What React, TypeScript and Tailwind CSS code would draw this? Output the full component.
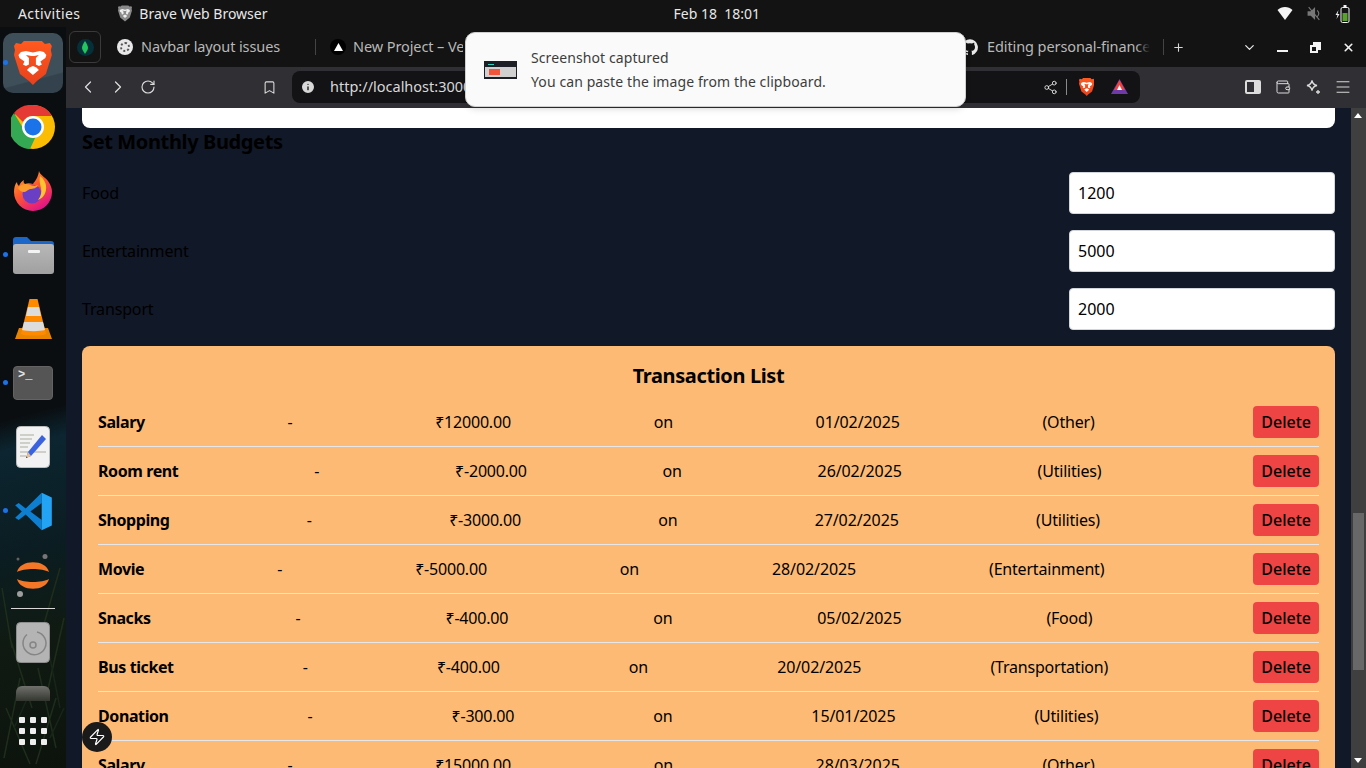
import { ChevronDown, ChevronLeft, ChevronRight, Info, Menu, Plus, RotateCw, Share2, Wallet, X, Zap, Bookmark } from "lucide-react";

const transactions = [
  { name: "Salary", amount: "₹12000.00", date: "01/02/2025", category: "(Other)" },
  { name: "Room rent", amount: "₹-2000.00", date: "26/02/2025", category: "(Utilities)" },
  { name: "Shopping", amount: "₹-3000.00", date: "27/02/2025", category: "(Utilities)" },
  { name: "Movie", amount: "₹-5000.00", date: "28/02/2025", category: "(Entertainment)" },
  { name: "Snacks", amount: "₹-400.00", date: "05/02/2025", category: "(Food)" },
  { name: "Bus ticket", amount: "₹-400.00", date: "20/02/2025", category: "(Transportation)" },
  { name: "Donation", amount: "₹-300.00", date: "15/01/2025", category: "(Utilities)" },
  { name: "Salary", amount: "₹15000.00", date: "28/03/2025", category: "(Other)" },
];

const budgets = [
  { label: "Food", value: "1200" },
  { label: "Entertainment", value: "5000" },
  { label: "Transport", value: "2000" },
];

function BraveIcon({ size = 44 }: { size?: number }) {
  return (
    <svg width={size * 0.86} height={size} viewBox="0 0 38 44">
      <defs>
        <linearGradient id="brave" x1="0" y1="0" x2="0" y2="1">
          <stop offset="0" stopColor="#ff5a1f" />
          <stop offset="1" stopColor="#e8401c" />
        </linearGradient>
      </defs>
      <path d="M10 0h18l3 3 5-1 2 3-1 4 1 5-6 19-9 7-4 4-4-4-9-7L0 14l1-5-1-4 2-3 5 1z" fill="url(#brave)" />
      <path d="M12 10l7 1.500L26 10l4 1 2.500 3-1 3-5 3.500 1.500 3-3 1.500-3-1.500V17l3-3-4.500 1h-3L12 14l3 3v6.500L12 25l-3-1.500 1.500-3-5-3.500-1-3L7 11z" fill="#fff" />
      <path d="M15.500 26.500L19 25l3.500 1.500L25 29l-6 5-6-5z" fill="#fff" />
    </svg>
  );
}

function ChromeIcon() {
  return (
    <svg width="44" height="44" viewBox="0 0 44 44">
      <circle cx="22" cy="22" r="22" fill="#fbbc04" />
      <path d="M22 0a22 22 0 0 1 19 11H22a11 11 0 0 0-10 6L3 8A22 22 0 0 1 22 0z" fill="#e53935" />
      <path d="M3 8l9.500 16a11 11 0 0 0 12 8L19 44A22 22 0 0 1 3 8z" fill="#34a853" />
      <circle cx="22" cy="22" r="11" fill="#fff" />
      <circle cx="22" cy="22" r="8.500" fill="#1a73e8" />
    </svg>
  );
}

function FirefoxIcon() {
  return (
    <svg width="40" height="40" viewBox="0 0 40 40">
      <defs>
        <linearGradient id="ff" x1="0" y1="0" x2="0.6" y2="1">
          <stop offset="0" stopColor="#ffbd2e" />
          <stop offset="0.5" stopColor="#ff5a2c" />
          <stop offset="1" stopColor="#e31587" />
        </linearGradient>
      </defs>
      <path d="M26 0c1 4 6 6 9 10 3 4 4 8 4 11a19 19 0 1 1-38 0c0-4 1-8 3-10 0 2 1 3 2 4 1-3 3-5 5-6-1 2 0 3 1 4 2-1 5-1 8 0 2-3 5-6 6-13z" fill="url(#ff)" />
      <circle cx="19" cy="23" r="9.500" fill="#6a3fc4" />
      <path d="M5 17c3-4 8-5 12-3 3 1 6 1 8 0-1 3-5 4-8 4-3 1-4 3-6 3-3 0-5-2-6-4z" fill="#ff9e2c" />
      <path d="M27 5c4 3 7 8 6 14-1 6-5 9-8 10 3-4 4-8 3-12-1-4-2-8-1-12z" fill="#ffc52e" />
    </svg>
  );
}

function FilesIcon() {
  return (
    <svg width="41" height="38" viewBox="0 0 41 38">
      <defs>
        <linearGradient id="folder" x1="0" y1="0" x2="0" y2="1">
          <stop offset="0" stopColor="#b8b8b8" />
          <stop offset="1" stopColor="#a0a0a0" />
        </linearGradient>
      </defs>
      <path d="M0 4a3 3 0 0 1 3-3h11l4 4h20a3 3 0 0 1 3 3v10H0z" fill="#1b66c9" />
      <rect y="8" width="41" height="30" rx="3" fill="url(#folder)" />
      <rect x="15" y="14" width="12" height="3" rx="1" fill="#f3f3f3" />
    </svg>
  );
}

function VlcIcon() {
  return (
    <svg width="37" height="42" viewBox="0 0 37 42">
      <path d="M4 30h29l4 11H0z" fill="#e88400" />
      <path d="M14.500 1h8l8.500 35c-4 2-21 2-25 0z" fill="#ff8a00" />
      <path d="M13 9h11l2 9H11z" fill="#dcdcdc" />
      <path d="M9 24h19l2 8c-5 1.500-18 1.500-23 0z" fill="#dcdcdc" />
    </svg>
  );
}

function TerminalIcon() {
  return (
    <div className="w-10 h-[34px] rounded-[4px] bg-[#555555] border border-[#636363] pl-[4px] pt-[1px] text-[#e5e5e5] text-[12px] leading-[14px] font-['Liberation_Mono',monospace] font-bold">
      &gt;_
    </div>
  );
}

function EditorIcon() {
  return (
    <svg width="34" height="42" viewBox="0 0 34 42">
      <rect x="0.500" y="0.500" width="33" height="41" rx="4" fill="#f2f2f2" stroke="#bdbdbd" />
      <path d="M4 9h14M4 13h12M4 17h10M4 21h8M4 26h26M4 30h6" stroke="#c4c4bc" strokeWidth="1.500" />
      <path d="M26 9l4 4-15 17-5 2 2-6z" fill="#3b63e0" />
      <path d="M12 26l3 4-5 2z" fill="#e9c08a" />
      <path d="M10.500 30.500L10 32l1.500-.5z" fill="#333" />
    </svg>
  );
}

function VscodeIcon() {
  return (
    <svg width="39" height="39" viewBox="0 0 100 100">
      <path d="M71 2L30 42 12 28l-9 6 17 16L3 66l9 6 18-14 41 40V72L42 50l29-22z" fill="#0e7fd0" />
      <path d="M71 2l26 12v72L71 98z" fill="#22a3f3" />
    </svg>
  );
}

function JupyterIcon() {
  return (
    <svg width="36" height="44" viewBox="0 0 36 44">
      <path d="M2 19C5 6 31 6 34 19 27 15 9 15 2 19z" fill="#f37726" />
      <path d="M2 26C5 39 31 39 34 26 27 30 9 30 2 26z" fill="#f37726" />
      <circle cx="30" cy="3.500" r="2.500" fill="#767677" />
      <circle cx="3" cy="6" r="1.500" fill="#616262" />
      <circle cx="5" cy="41" r="3" fill="#9e9e9e" />
    </svg>
  );
}

function DiscIcon() {
  return (
    <svg width="34" height="41" viewBox="0 0 34 41">
      <rect x="0.500" y="0.500" width="33" height="40" rx="4" fill="#b4b4b4" stroke="#8e8e8e" />
      <path d="M21 10a11.500 11.500 0 1 1-10 2.500" fill="none" stroke="#858585" strokeWidth="1.500" />
      <circle cx="17" cy="23" r="3" fill="none" stroke="#858585" strokeWidth="1.500" />
    </svg>
  );
}

function Grass() {
  return (
    <svg className="absolute left-0 bottom-0" width="66" height="220" viewBox="0 0 66 220" fill="none" stroke="#1f2e1a" strokeWidth="1.500">
      <path d="M2 40l10 60M60 20L40 90M10 90l22 70M64 70L46 150M20 130L4 210M38 120l18 80M56 150l-20 66M6 160l24 56" />
      <path d="M48 100l12 60M14 180l18-40M50 190l14-30" stroke="#18251a" />
    </svg>
  );
}

function DockItem({ dot, active, children }: { dot?: boolean; active?: boolean; children: React.ReactNode }) {
  return (
    <div className="relative h-16 w-full flex items-center justify-center">
      {active && <div className="absolute left-[3px] top-[2px] w-[60px] h-[60px] rounded-[10px] bg-[linear-gradient(165deg,#3f4f5a_0%,#3f4f5a_72%,#33424c_74%)]" />}
      {dot && <div className="absolute left-[3px] top-[29px] w-[5px] h-[5px] rounded-full bg-[#1a73e8]" />}
      <div className="relative flex">{children}</div>
    </div>
  );
}

function Dock() {
  return (
    <aside className="relative w-[66px] shrink-0 flex flex-col pt-[4px] overflow-hidden bg-[linear-gradient(165deg,#0a0e11_0%,#0a0e11_52%,#0c2530_56%,#0b1d22_70%,#101a12_82%,#0c130d_100%)]">
      <Grass />
      <DockItem active dot>
        <BraveIcon />
      </DockItem>
      <DockItem>
        <ChromeIcon />
      </DockItem>
      <DockItem>
        <FirefoxIcon />
      </DockItem>
      <DockItem dot>
        <FilesIcon />
      </DockItem>
      <DockItem>
        <VlcIcon />
      </DockItem>
      <DockItem dot>
        <TerminalIcon />
      </DockItem>
      <DockItem>
        <EditorIcon />
      </DockItem>
      <DockItem dot>
        <VscodeIcon />
      </DockItem>
      <DockItem>
        <JupyterIcon />
      </DockItem>
      <div className="relative h-px mx-[11px] mt-[1px] bg-[#d8d8d8] shrink-0" />
      <div className="relative flex justify-center mt-[13px] shrink-0">
        <DiscIcon />
      </div>
      <div className="relative mx-auto mt-[23px] w-[34px] h-[15px] shrink-0 rounded-t-[6px] bg-[linear-gradient(#70706c,#33362f)]" />
      <div className="relative mx-auto mt-[16px] grid grid-cols-3 gap-[5px] shrink-0">
        {Array.from({ length: 9 }).map((_, i) => (
          <div key={i} className="w-[6px] h-[6px] rounded-[1px] bg-[#eeeeee]" />
        ))}
      </div>
    </aside>
  );
}

function TopBar() {
  return (
    <header className="h-[27px] shrink-0 bg-[#131313] text-[#e8e8e8] text-[14px] flex items-center relative">
      <span className="ml-[18px] tracking-[0.4px]">Activities</span>
      <svg className="ml-[38px]" width="14" height="17" viewBox="0 0 38 44">
        <path d="M10 0h18l3 3 5-1 2 3-1 4 1 5-6 19-9 7-4 4-4-4-9-7L0 14l1-5-1-4 2-3 5 1z" fill="#8a8a8a" />
        <path d="M12 10l7 1.500L26 10l4 1 2.500 3-1 3-5 3.500 1.500 3-3 1.500-3-1.500V17l3-3-4.500 1h-3L12 14l3 3v6.500L12 25l-3-1.500 1.500-3-5-3.500-1-3L7 11z" fill="#eee" />
        <path d="M15.500 26.500L19 25l3.500 1.500L25 29l-6 5-6-5z" fill="#eee" />
      </svg>
      <span className="ml-[7px]">Brave Web Browser</span>
      <span className="ml-[406px]">Feb 18&nbsp; 18:01</span>
      <div className="ml-auto mr-[16px] flex items-center gap-[13px]">
        <svg width="16" height="13" viewBox="0 0 15 13">
          <path d="M0 3c4-4 11-4 15 0l-7.500 10z" fill="#f4f4f4" />
        </svg>
        <svg width="16" height="15" viewBox="0 0 14 14">
          <path d="M1 5h3l4-4v12l-4-4H1z" fill="#777" />
          <path d="M10 4c2 2 2 4 0 6M2 1l10 12" stroke="#777" fill="none" />
        </svg>
        <svg width="15" height="18" viewBox="0 0 14 18">
          <path d="M3 5L0 10h2l-1 4 3-5H2z" fill="#f4f4f4" />
          <rect x="5.500" y="2.500" width="8" height="15" rx="1.500" fill="none" stroke="#f4f4f4" />
          <rect x="8" y="0" width="3" height="2" fill="#f4f4f4" />
          <rect x="7" y="8" width="5" height="8" fill="#5aa02c" />
        </svg>
      </div>
    </header>
  );
}

function TabStrip() {
  return (
    <div className="h-[40px] shrink-0 bg-[#131313] flex items-center text-[14.5px] tracking-[-0.1px] text-[#b8b8b8]">
      <div className="ml-[3px] w-[32px] h-[32px] rounded-[6px] border border-[#3a3a3a] flex items-center justify-center">
        <div className="w-[17px] h-[17px] rounded-full bg-[#05303a] flex items-center justify-center">
          <svg width="6" height="13" viewBox="0 0 6 13">
            <path d="M3 0c2 3 3 5 3 7s-2 4-3 6c-1-2-3-4-3-6s1-4 3-7z" fill="#22c55e" />
          </svg>
        </div>
      </div>
      <div className="ml-[16px] w-[16px] h-[16px] rounded-full bg-[#e8e8e8] flex items-center justify-center">
        <div className="w-[10px] h-[10px] rounded-full border-2 border-dotted border-[#555555]" />
      </div>
      <span className="ml-[8px]">Navbar layout issues</span>
      <div className="ml-[35px] w-px h-[16px] bg-[#444444]" />
      <div className="ml-[14px] w-[16px] h-[16px] rounded-full bg-black flex items-center justify-center">
        <svg width="9" height="8" viewBox="0 0 9 8">
          <path d="M4.500 0L9 8H0z" fill="#fff" />
        </svg>
      </div>
      <span className="ml-[7px] w-[110px] overflow-hidden whitespace-nowrap">New Project – Vercel</span>
      <svg className="ml-[499px]" width="16" height="16" viewBox="0 0 24 24">
        <path
          fill="#e8e8e8"
          d="M12 .5a12 12 0 0 0-3.800 23.400c.6.100.8-.3.800-.6v-2c-3.300.7-4-1.600-4-1.600-.6-1.400-1.400-1.800-1.400-1.800-1-.7.100-.7.100-.7 1.200.1 1.800 1.200 1.800 1.200 1 1.800 2.800 1.300 3.500 1 .1-.8.400-1.300.8-1.600-2.700-.3-5.500-1.300-5.500-5.900 0-1.300.5-2.400 1.200-3.200-.1-.3-.5-1.500.1-3.200 0 0 1-.3 3.300 1.200a11.500 11.500 0 0 1 6 0c2.300-1.500 3.300-1.200 3.300-1.200.6 1.700.2 2.900.1 3.200.8.800 1.200 1.900 1.200 3.200 0 4.600-2.800 5.600-5.500 5.900.4.400.8 1.100.8 2.200v3.300c0 .3.200.7.800.6A12 12 0 0 0 12 .5z"
        />
      </svg>
      <span className="ml-[9px] relative w-[163px] overflow-hidden whitespace-nowrap">
        Editing personal-finance
        <span className="absolute right-0 top-0 bottom-0 w-[14px] bg-[linear-gradient(to_right,transparent,#131313)]" />
      </span>
      <div className="ml-[13px] w-px h-[16px] bg-[#444444]" />
      <Plus className="ml-[8px] text-[#d8d8d8]" size={13} strokeWidth={2} />
      <ChevronDown className="ml-[57px] text-[#e8e8e8]" size={15} strokeWidth={2} />
      <div className="ml-[20px] w-[11px] h-[2px] translate-y-[4px] bg-[#f2f2f2]" />
      <div className="ml-[22px] relative w-[11px] h-[11px]">
        <div className="absolute right-0 top-0 w-[8px] h-[8px] bg-[#f2f2f2]" />
        <div className="absolute left-0 bottom-0 w-[8px] h-[8px] border-2 border-[#f2f2f2] bg-[#131313]" />
      </div>
      <X className="ml-[21px] text-[#f2f2f2]" size={13} strokeWidth={3} />
    </div>
  );
}

function Toolbar() {
  return (
    <div className="h-[41px] shrink-0 pb-px bg-[#303034] flex items-center text-[#dcdcdc]">
      <ChevronLeft className="ml-[12px]" size={20} strokeWidth={1.5} />
      <ChevronRight className="ml-[10px]" size={20} strokeWidth={1.5} />
      <RotateCw className="ml-[12px]" size={16} strokeWidth={1.7} />
      <Bookmark className="ml-[106px]" size={15} strokeWidth={1.7} />
      <div className="ml-[15px] w-[848px] h-[32px] rounded-[8px] bg-[#131316] flex items-center">
        <Info className="ml-[8px] fill-[#d8d8d8] text-[#131316]" size={16} strokeWidth={2} />
        <span className="ml-[14px] text-[14.5px] text-[#d8d8d8]">http://localhost:3000</span>
        <Share2 className="ml-auto" size={15} strokeWidth={1.5} />
        <div className="ml-[8px] w-px h-[16px] bg-[#8a8a8a]" />
        <div className="ml-[12px] flex">
          <BraveIcon size={18} />
        </div>
        <svg className="ml-[17px] mr-[12px]" width="17" height="16" viewBox="0 0 17 16">
          <path d="M8.500 0L17 15H0z" fill="#6f3aa8" />
          <path d="M8.500 1L14 11H3z" fill="#f0443c" />
          <path d="M8.500 6L11 11H6z" fill="#fff" />
        </svg>
      </div>
      <div className="ml-[105px] w-[16px] h-[14px] border-2 border-[#dcdcdc] rounded-[2px] flex justify-end">
        <div className="w-[5px] bg-[#dcdcdc]" />
      </div>
      <Wallet className="ml-[14px]" size={16} strokeWidth={1.5} />
      <svg className="ml-[14px]" width="16" height="16" viewBox="0 0 16 16" fill="none" stroke="currentColor" strokeWidth="1.300">
        <path d="M7 1.500c.6 3 2 4.500 5 5-3 .6-4.400 2-5 5-.6-3-2-4.400-5-5 3-.5 4.400-2 5-5z" />
        <path d="M13 11v4M11 13h4" />
      </svg>
      <Menu className="ml-[13px]" size={18} strokeWidth={1.3} />
    </div>
  );
}

function Notification() {
  return (
    <div className="absolute left-[465px] top-[32px] w-[501px] h-[75px] rounded-[10px] bg-[#fafafa] border border-[#cfcfcf] shadow-md flex items-center">
      <div className="ml-[18px] w-[33px] h-[18px] bg-[#1c1f26] flex flex-col">
        <div className="ml-[4px] mt-[3px] w-[6px] h-px bg-[#2dd4bf]" />
        <div className="mx-px mt-[2px] h-[10px] bg-[#d0d0d0] flex items-center">
          <div className="ml-[4px] w-[11px] h-[6px] bg-[#f0553c]" />
        </div>
      </div>
      <div className="ml-[14px] text-[14px] tracking-[0.1px] text-[#3d3d3d] flex flex-col gap-[6px] leading-[18px]">
        <span>Screenshot captured</span>
        <span>You can paste the image from the clipboard.</span>
      </div>
    </div>
  );
}

function Scrollbar() {
  return (
    <div className="relative w-[15px] shrink-0 bg-[#3f3f3f]">
      <div className="absolute left-[2px] top-[405px] w-[11px] h-[157px] bg-[#686868]" />
      <div className="absolute left-[3px] top-[5px] border-x-[4px] border-x-transparent border-b-[5px] border-b-white" />
      <div className="absolute left-[3px] bottom-[5px] border-x-[4px] border-x-transparent border-t-[5px] border-t-white" />
    </div>
  );
}

function TransactionRow({ tx }: { tx: (typeof transactions)[number] }) {
  return (
    <li className="flex justify-between items-center py-2 border-b border-gray-200 tracking-[-0.2px]">
      <span className="font-bold tracking-[-0.4px]">{tx.name}</span>
      <span>-</span>
      <span>{tx.amount}</span>
      <span>on</span>
      <span className="tracking-[-0.1px]">{tx.date}</span>
      <span>{tx.category}</span>
      <button className="ml-4 px-2 py-1 rounded bg-[#ef4444] font-medium text-black tracking-normal">Delete</button>
    </li>
  );
}

export default function App() {
  return (
    <div className="relative h-screen overflow-hidden flex flex-col font-['Noto_Sans',sans-serif] text-black">
      <TopBar />
      <div className="flex flex-1 min-h-0">
        <Dock />
        <div className="flex-1 min-w-0 flex flex-col">
          <TabStrip />
          <Toolbar />
          <div className="flex flex-1 min-h-0">
            <main className="flex-1 min-w-0 px-4 bg-[#111827] overflow-hidden">
              <div className="h-5 rounded-b-lg bg-white" />
              <h2 className="text-xl font-bold mb-4 tracking-[-0.37px]">Set Monthly Budgets</h2>
              {budgets.map((b) => (
                <div key={b.label} className="flex justify-between items-center mb-4">
                  <label className="tracking-[-0.15px]">{b.label}</label>
                  <input
                    readOnly
                    value={b.value}
                    className="w-[266px] h-[42px] px-2 rounded border border-gray-300 bg-white text-black"
                  />
                </div>
              ))}
              <section className="p-4 rounded-lg bg-[#fdba74]">
                <h2 className="text-xl font-bold text-center mb-2 tracking-[-0.37px]">Transaction List</h2>
                <ul>
                  {transactions.map((tx, i) => (
                    <TransactionRow key={i} tx={tx} />
                  ))}
                </ul>
              </section>
            </main>
            <Scrollbar />
          </div>
        </div>
      </div>
      <Notification />
      <div className="absolute left-[82px] top-[722px] w-[30px] h-[30px] rounded-full bg-[#1a1a1a] flex items-center justify-center">
        <Zap size={18} className="text-white" strokeWidth={1.6} />
      </div>
    </div>
  );
}
